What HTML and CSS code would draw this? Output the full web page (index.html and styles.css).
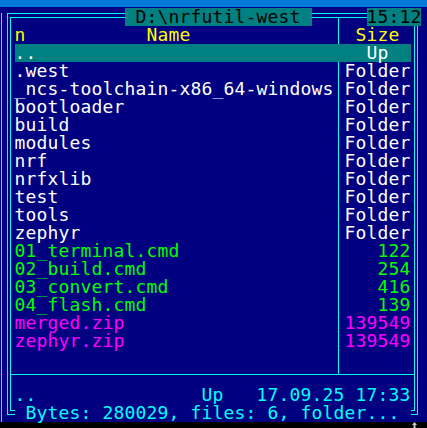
FILE: index.html
```html
<!DOCTYPE html>
<html>
<head>
<meta charset="utf-8">
<link rel="stylesheet" href="styles.css">
</head>
<body>
<div class="topbar"></div>
<div class="screen">
  <div class="edge"></div>
  <div class="panel">
    <div class="inner">
      <div class="files">
        <div class="row head"><span class="c-name">n           Name</span><span class="c-sep"></span><span class="c-size center">Size</span></div>
        <div class="row cursor"><span class="c-name">..</span><span class="c-sep"></span><span class="c-size center">Up</span></div>
        <div class="row dir"><span class="c-name">.west</span><span class="c-sep"></span><span class="c-size">Folder</span></div>
        <div class="row dir"><span class="c-name">_ncs-toolchain-x86_64-windows</span><span class="c-sep"></span><span class="c-size">Folder</span></div>
        <div class="row dir"><span class="c-name">bootloader</span><span class="c-sep"></span><span class="c-size">Folder</span></div>
        <div class="row dir"><span class="c-name">build</span><span class="c-sep"></span><span class="c-size">Folder</span></div>
        <div class="row dir"><span class="c-name">modules</span><span class="c-sep"></span><span class="c-size">Folder</span></div>
        <div class="row dir"><span class="c-name">nrf</span><span class="c-sep"></span><span class="c-size">Folder</span></div>
        <div class="row dir"><span class="c-name">nrfxlib</span><span class="c-sep"></span><span class="c-size">Folder</span></div>
        <div class="row dir"><span class="c-name">test</span><span class="c-sep"></span><span class="c-size">Folder</span></div>
        <div class="row dir"><span class="c-name">tools</span><span class="c-sep"></span><span class="c-size">Folder</span></div>
        <div class="row dir"><span class="c-name">zephyr</span><span class="c-sep"></span><span class="c-size">Folder</span></div>
        <div class="row exe"><span class="c-name">01_terminal.cmd</span><span class="c-sep"></span><span class="c-size">122</span></div>
        <div class="row exe"><span class="c-name">02_build.cmd</span><span class="c-sep"></span><span class="c-size">254</span></div>
        <div class="row exe"><span class="c-name">03_convert.cmd</span><span class="c-sep"></span><span class="c-size">416</span></div>
        <div class="row exe"><span class="c-name">04_flash.cmd</span><span class="c-sep"></span><span class="c-size">139</span></div>
        <div class="row arc"><span class="c-name">merged.zip</span><span class="c-sep"></span><span class="c-size">139549</span></div>
        <div class="row arc"><span class="c-name">zephyr.zip</span><span class="c-sep"></span><span class="c-size">139549</span></div>
      </div>
      <div class="hline"></div>
      <div class="info">..               Up   17.09.25 17:33</div>
    </div>
    <div class="title"> D:\nrfutil-west </div>
    <div class="clock">15:12</div>
    <div class="status"> Bytes: 280029, files: 6, folder... </div>
  </div>
</div>
<div class="bottombar">
  <svg class="grip" width="7" height="6" viewBox="0 0 7 6"><path d="M3.5 0 L6 3 L4.5 3 L4.5 6 L2.5 6 L2.5 3 L1 3 Z" fill="#c8c8d0"/></svg>
</div>
</body>
</html>
```

FILE: styles.css
```css
html, body {
  margin: 0;
  padding: 0;
}
body {
  width: 427px;
  height: 428px;
  overflow: hidden;
  background: #000080;
  font-family: "DejaVu Sans Mono", monospace;
  font-size: 18px;
  letter-spacing: 0.164px;
  line-height: 18px;
  color: #ffffff;
}
.topbar {
  height: 7px;
  background: #0078d7;
}
.screen {
  display: flex;
  height: 415px;
  padding-top: 6px;
  box-sizing: border-box;
}
.edge {
  margin-left: 1px;
  width: 6px;
  border-left: 1px solid #00ffff;
  box-sizing: border-box;
}
.panel {
  position: relative;
  width: 411px;
  height: 402px;
  box-sizing: border-box;
  border: 1px solid #00ffff;
  padding: 3px 2px;
}
.inner {
  height: 394px;
  box-sizing: border-box;
  border: 1px solid #00ffff;
  display: flex;
  flex-direction: column;
}
.files {
  height: 356px;
  box-sizing: border-box;
  padding: 8px 0 0 3.5px;
  background-image: linear-gradient(#00ffff, #00ffff);
  background-size: 1px 100%;
  background-position: 327px 0;
  background-repeat: no-repeat;
}
.row {
  display: grid;
  grid-template-columns: 319px 11px 66px;
  width: 396px;
  height: 18px;
  white-space: pre;
}
.c-size {
  text-align: right;
}
.c-size.center {
  text-align: center;
}
.head { color: #ffff00; }
.cursor { background: #008080; color: #ffffff; }
.dir { color: #ffffff; }
.exe { color: #00ff00; }
.arc { color: #ff00ff; }
.hline {
  border-top: 1px solid #00ffff;
}
.info {
  margin-top: 11px;
  padding-left: 3.5px;
  height: 18px;
  white-space: pre;
  color: #00ffff;
}
.title, .clock {
  position: absolute;
  top: -6px;
  height: 18px;
  background: #008080;
  color: #000000;
  white-space: pre;
}
.title {
  left: 116.5px;
}
.clock {
  left: 358.5px;
  width: 54px;
}
.status {
  position: absolute;
  left: 6.5px;
  top: 390px;
  width: 396px;
  height: 18px;
  background: #000080;
  color: #00ffff;
  white-space: pre;
}
.bottombar {
  height: 6px;
  background: #000000;
  display: flex;
  justify-content: flex-end;
  padding-right: 9px;
}
.grip {
  display: block;
}
```
